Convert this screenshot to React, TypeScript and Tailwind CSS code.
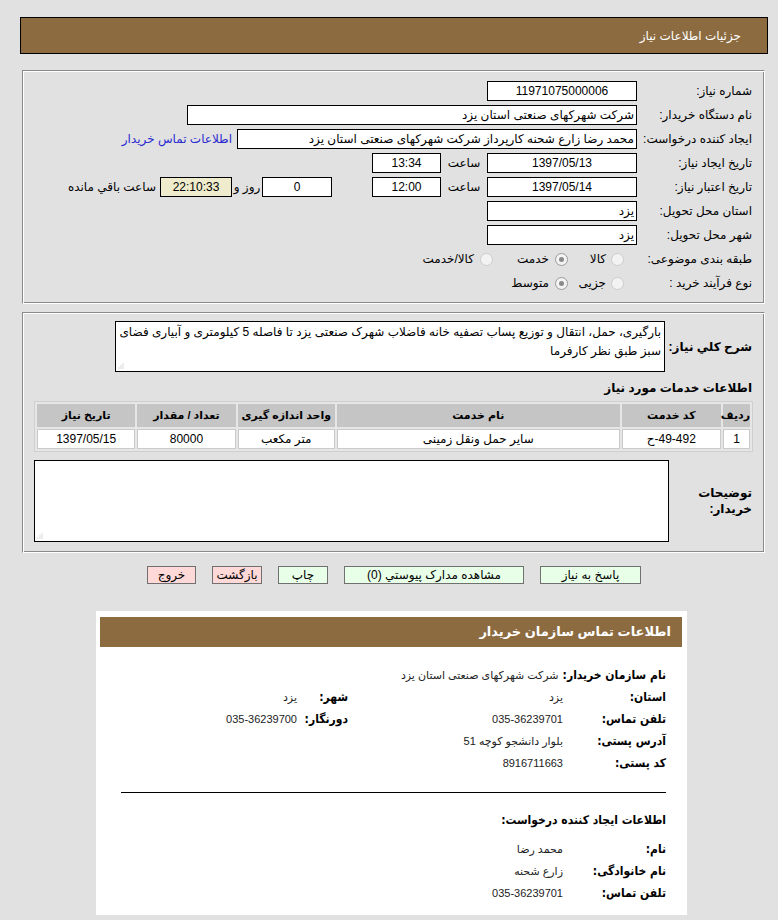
import type { ReactNode } from "react";

const FONT = { fontFamily: '"Liberation Sans", "DejaVu Sans", sans-serif' };

function Box({
  w,
  children,
  center,
  className = "",
}: {
  w: string;
  children?: ReactNode;
  center?: boolean;
  className?: string;
}) {
  return (
    <div
      className={`flex h-[20px] shrink-0 items-center overflow-hidden whitespace-nowrap border border-black px-[2px] text-[12px] ${
        center ? "justify-center" : ""
      } ${w} ${className || "bg-white"}`}
    >
      {children}
    </div>
  );
}

function Radio({ checked }: { checked?: boolean }) {
  return (
    <span
      className={`flex h-[13px] w-[13px] shrink-0 items-center justify-center rounded-full border bg-[#f3f3f3] ${
        checked ? "border-[#9a9a9a]" : "border-[#cdcdcd]"
      }`}
    >
      {checked && <span className="h-[5px] w-[5px] rounded-full bg-[#8a8a8a]" />}
    </span>
  );
}

function Grip() {
  return (
    <svg
      width="6"
      height="6"
      viewBox="0 0 6 6"
      className="absolute bottom-[2px] left-[2px]"
    >
      {[
        [1, 5],
        [3, 5],
        [5, 5],
        [3, 3],
        [5, 3],
        [5, 1],
      ].map(([x, y]) => (
        <rect key={`${x}-${y}`} x={x - 0.5} y={y - 0.5} width="1" height="1" fill="#b5b5b5" />
      ))}
    </svg>
  );
}

const groove =
  "border border-t-[#8a8a8a] border-l-[#8a8a8a] border-b-white border-r-white shadow-[inset_1px_1px_0_#fff,inset_-1px_-1px_0_#8a8a8a]";

function Row({ label, children }: { label: string; children: ReactNode }) {
  return (
    <div className="flex h-[24px] items-center">
      <div className="w-[115px] shrink-0 whitespace-nowrap text-[12px]">{label}</div>
      {children}
    </div>
  );
}

const labelFont = { fontFamily: '"DejaVu Sans Condensed", "DejaVu Sans", sans-serif' };

function InfoRow({
  label,
  value,
  label2,
  value2,
}: {
  label: string;
  value: string;
  label2?: string;
  value2?: string;
}) {
  return (
    <div className="flex h-[22px] items-center whitespace-nowrap">
      <div style={labelFont} className="min-w-[103px] shrink-0 pl-[4px] text-[12px] font-bold">
        {label}
      </div>
      <div className="w-[215px] shrink-0 text-[11px] text-[#222]">{value}</div>
      {label2 && (
        <>
          <div style={labelFont} className="w-[51px] shrink-0 text-[12px] font-bold">
            {label2}
          </div>
          <div className="text-[11px] text-[#222]">{value2}</div>
        </>
      )}
    </div>
  );
}

const columns = [
  { title: "ردیف", w: "w-[27px]" },
  { title: "کد خدمت", w: "w-[99px]" },
  { title: "نام خدمت", w: "w-[282px]" },
  { title: "واحد اندازه گیری", w: "w-[97px]" },
  { title: "تعداد / مقدار", w: "w-[98px]" },
  { title: "تاریخ نیاز", w: "w-[98px]" },
];

export default function App() {
  return (
    <div
      dir="rtl"
      style={FONT}
      className="flex h-[920px] w-[778px] flex-col overflow-hidden bg-[#e1e1e1] text-black"
    >
      <div className="mt-[17px] ml-[20px] mr-[10px] flex h-[37px] shrink-0 items-center border border-black bg-[#8c6b40] pr-[26px] text-[12px] text-white">
        جزئیات اطلاعات نیاز
      </div>

      <div className={`mt-[16px] ml-[22px] mr-[13px] h-[234px] shrink-0 pt-[8px] pr-[12px] ${groove}`}>
        <Row label="شماره نیاز:">
          <Box w="w-[150px]" center>
            11971075000006
          </Box>
        </Row>
        <Row label="نام دستگاه خریدار:">
          <Box w="w-[450px]">شرکت شهرکهای صنعتی استان یزد</Box>
        </Row>
        <Row label="ایجاد کننده درخواست:">
          <Box w="w-[400px]">محمد رضا زارع شحنه کارپرداز شرکت شهرکهای صنعتی استان یزد</Box>
          <span className="mr-[5px] whitespace-nowrap text-[12px] text-[#2a2ad0]">
            اطلاعات تماس خریدار
          </span>
        </Row>
        <Row label="تاریخ ایجاد نیاز:">
          <Box w="w-[150px]" center>
            1397/05/13
          </Box>
          <span className="w-[46px] text-center text-[12px]">ساعت</span>
          <Box w="w-[69px]" center>
            13:34
          </Box>
        </Row>
        <Row label="تاریخ اعتبار نیاز:">
          <Box w="w-[150px]" center>
            1397/05/14
          </Box>
          <span className="w-[46px] text-center text-[12px]">ساعت</span>
          <Box w="w-[69px]" center>
            12:00
          </Box>
          <div className="w-[40px]" />
          <Box w="w-[70px]" center>
            0
          </Box>
          <span className="w-[30px] whitespace-nowrap text-center text-[12px]">روز و</span>
          <Box w="w-[72px]" center className="bg-[#eeeccc]">
            22:10:33
          </Box>
          <span className="mr-[4px] whitespace-nowrap text-[12px]">ساعت باقي مانده</span>
        </Row>
        <Row label="استان محل تحویل:">
          <Box w="w-[150px]">یزد</Box>
        </Row>
        <Row label="شهر محل تحویل:">
          <Box w="w-[150px]">یزد</Box>
        </Row>
        <Row label="طبقه بندی موضوعی:">
          <div className="flex w-[69px] shrink-0 items-center pr-[13px]">
            <Radio />
            <span className="mr-[5px] text-[12px]">کالا</span>
          </div>
          <div className="flex w-[75px] shrink-0 items-center">
            <Radio checked />
            <span className="mr-[6px] text-[12px]">خدمت</span>
          </div>
          <div className="flex items-center">
            <Radio />
            <span className="mr-[6px] whitespace-nowrap text-[12px]">کالا/خدمت</span>
          </div>
        </Row>
        <Row label="نوع فرآیند خرید :">
          <div className="flex w-[69px] shrink-0 items-center pr-[13px]">
            <Radio />
            <span className="mr-[5px] text-[12px]">جزیی</span>
          </div>
          <div className="flex items-center">
            <Radio checked />
            <span className="mr-[6px] text-[12px]">متوسط</span>
          </div>
        </Row>
      </div>

      <div className={`mt-[8px] ml-[22px] mr-[13px] h-[241px] shrink-0 pt-[8px] pr-[12px] ${groove}`}>
        <div className="flex items-center">
          <div className="w-[87px] shrink-0 whitespace-nowrap text-[12px] font-bold">شرح کلي نیاز:</div>
          <div className="relative h-[51px] w-[550px] border border-black bg-white px-[3px] pt-[1px] text-[12px] leading-[19px]">
            <div className="whitespace-nowrap">
              بارگیری، حمل، انتقال و توزیع پساب تصفیه خانه فاضلاب شهرک صنعتی یزد تا فاصله 5 کیلومتری و آبیاری فضای
            </div>
            <div>سبز طبق نظر کارفرما</div>
            <Grip />
          </div>
        </div>

        <div className="mt-[8px] flex h-[16px] items-center text-[12px] font-bold">اطلاعات خدمات مورد نیاز</div>

        <table className="mt-[5px] mr-[-1px] w-[719px] table-fixed border-separate border-spacing-[2px] border border-[#cfcfcf] bg-[#e6e6e6] text-[12px]">
          <colgroup>
            {columns.map((c) => (
              <col key={c.title} className={c.w} />
            ))}
          </colgroup>
          <thead>
            <tr>
              {columns.map((c) => (
                <th
                  key={c.title}
                  className="h-[23px] whitespace-nowrap bg-[#c5c5c5] px-0 text-center text-[11px] font-bold"
                >
                  {c.title}
                </th>
              ))}
            </tr>
          </thead>
          <tbody>
            <tr>
              <td className="h-[20px] border border-[#cacaca] bg-white text-center">1</td>
              <td className="border border-[#cacaca] bg-white text-center">49-492-ح</td>
              <td className="border border-[#cacaca] bg-white text-center">سایر حمل ونقل زمینی</td>
              <td className="border border-[#cacaca] bg-white text-center">متر مکعب</td>
              <td className="border border-[#cacaca] bg-white text-center">80000</td>
              <td className="border border-[#cacaca] bg-white text-center">1397/05/15</td>
            </tr>
          </tbody>
        </table>

        <div className="mt-[8px] flex items-center">
          <div className="w-[83px] shrink-0 text-[12px] font-bold leading-[16px]">
            توضیحات
            <br />
            خریدار:
          </div>
          <div className="relative h-[82px] w-[635px] border border-black bg-white">
            <Grip />
          </div>
        </div>
      </div>

      <div className="mt-[13px] flex h-[18px] shrink-0 gap-[16px] pr-[137px] text-[12px]">
        <div className="flex w-[101px] items-center justify-center border border-[#707070] bg-[#e8ffe8]">
          پاسخ به نیاز
        </div>
        <div className="flex w-[180px] items-center justify-center border border-[#707070] bg-[#e8ffe8]">
          مشاهده مدارک پیوستي (0)
        </div>
        <div className="flex w-[50px] items-center justify-center border border-[#707070] bg-[#e8ffe8]">
          چاپ
        </div>
        <div className="flex w-[50px] items-center justify-center whitespace-nowrap border border-[#707070] bg-[#ffd8d8]">
          بازگشت
        </div>
        <div className="flex w-[49px] items-center justify-center border border-[#707070] bg-[#ffd8d8]">
          خروج
        </div>
      </div>

      <div className="mt-[27px] mr-[91px] w-[591px] shrink-0 bg-white pt-[6px] pb-[11px]">
        <div className="ml-[4px] mr-[5px] flex h-[30px] items-center bg-[#8c6b40] pr-[11px] text-[13px] font-bold text-white">
          اطلاعات تماس سازمان خریدار
        </div>
        <div className="pr-[21px] pl-[25px]">
          <div className="mt-[17px]">
            <InfoRow label="نام سازمان خریدار:" value="شرکت شهرکهای صنعتی استان یزد" />
            <InfoRow label="استان:" value="یزد" label2="شهر:" value2="یزد" />
            <InfoRow label="تلفن تماس:" value="035-36239701" label2="دورنگار:" value2="035-36239700" />
            <InfoRow label="آدرس پستی:" value="بلوار دانشجو کوچه 51" />
            <InfoRow label="کد پستی:" value="8916711663" />
          </div>
          <div className="mt-[18px] h-px bg-black" />
          <div style={labelFont} className="mt-[16px] flex h-[22px] items-center text-[12px] font-bold">
            اطلاعات ایجاد کننده درخواست:
          </div>
          <div className="mt-[7px]">
            <InfoRow label="نام:" value="محمد رضا" />
            <InfoRow label="نام خانوادگی:" value="زارع شحنه" />
            <InfoRow label="تلفن تماس:" value="035-36239701" />
          </div>
        </div>
      </div>
    </div>
  );
}
